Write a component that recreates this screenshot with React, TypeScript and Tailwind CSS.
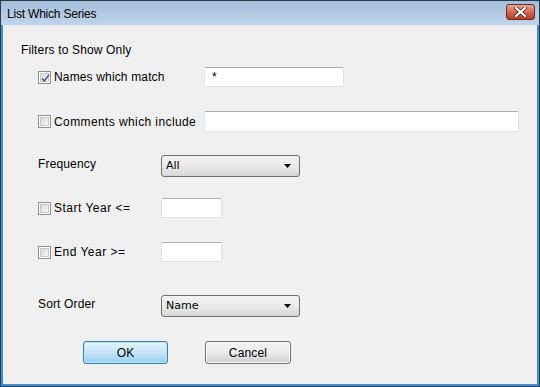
import React from "react";

const font = { fontFamily: '"Liberation Sans", Arial, sans-serif', letterSpacing: "0.15px" };

function Checkbox({ checked }: { checked?: boolean }) {
  return (
    <div className="w-[13px] h-[13px] border border-[#8e8f8f] bg-white p-[1px] shrink-0">
      <div className="w-full h-full border border-[#c6c6c6] bg-gradient-to-br from-[#d9d9d9] to-[#f7f7f7] relative">
        {checked && (
          <svg className="absolute left-[-1px] top-[-1px]" width="11" height="11" viewBox="0 0 11 11">
            <path d="M2 5.5 L4.3 8 L9 1.8" fill="none" stroke="#4a5f97" strokeWidth="1.6" />
          </svg>
        )}
      </div>
    </div>
  );
}

function TextBox({ w, value }: { w: string; value?: string }) {
  return (
    <div
      className={`${w} h-full bg-white border border-[#e2e3ea] border-t-[#abadb3] rounded-[2px] flex items-center pl-[7px] text-[12px] text-black`}
    >
      {value}
    </div>
  );
}

function Combo({ value }: { value: string }) {
  return (
    <div className="w-[139px] h-full rounded-[3px] border border-[#707070] bg-gradient-to-b from-[#f2f2f2] via-[#ebebeb] to-[#d6d6d6] flex items-center justify-between pl-[4px] pr-[8px]">
      <span className="text-[12px] text-black" style={{ fontFamily: 'Tahoma, "DejaVu Sans", "Liberation Sans", sans-serif', fontSize: "11px", letterSpacing: "0" }}>
        {value}
      </span>
      <svg width="7" height="4" viewBox="0 0 7 4">
        <path d="M0 0 H7 L3.5 4 Z" fill="#000" />
      </svg>
    </div>
  );
}

export default function App() {
  return (
    <div className="w-[540px] h-[387px] bg-[#2a3b4d] p-[1px]" style={font}>
      <div className="w-full h-full flex flex-col bg-[#3d8fd0]">
        {/* Title bar */}
        <div className="h-[24px] shrink-0 bg-gradient-to-b from-[#a3bdd9] to-[#c0d5ec] flex items-center justify-between pl-[6px] pr-[4px]">
          <span className="text-[12px] text-black mt-[1px]" style={{ fontFamily: '"Liberation Sans", Arial, sans-serif', letterSpacing: "-0.2px" }}>
            List Which Series
          </span>
          <div className="w-[29px] h-[16px] rounded-[3px] border border-[#6b2a22] bg-gradient-to-b from-[#e3a696] via-[#cf6b56] to-[#b83a24] flex items-center justify-center mt-[-3px]">
            <svg width="13" height="10" viewBox="0 0 13 10">
              <path d="M2 1 L11 9 M11 1 L2 9" stroke="#4a1f18" strokeWidth="3.6" strokeLinecap="square" />
              <path d="M2 1 L11 9 M11 1 L2 9" stroke="#ffffff" strokeWidth="2.2" strokeLinecap="square" />
            </svg>
          </div>
        </div>
        {/* Client */}
        <div className="flex-1 ml-[2px] mr-[2px] mb-[2px] bg-[#f0f0f0] flex flex-col text-[12px] text-black">
          <div className="h-[14px] mt-[18px] pl-[18px] flex items-center">Filters to Show Only</div>

          <div className="h-[20px] mt-[10px] pl-[35px] flex items-center">
            <div className="w-[166px] flex items-center gap-[3px]">
              <Checkbox checked />
              <span>Names which match</span>
            </div>
            <TextBox w="w-[140px]" value="*" />
          </div>

          <div className="h-[21px] mt-[24px] pl-[35px] flex items-center">
            <div className="w-[166px] flex items-center gap-[3px]">
              <Checkbox />
              <span style={{ letterSpacing: "0.4px" }}>Comments which include</span>
            </div>
            <TextBox w="w-[315px]" />
          </div>

          <div className="h-[22px] mt-[23px] pl-[35px] flex items-center">
            <div className="w-[123px] mt-[-4px]">Frequency</div>
            <Combo value="All" />
          </div>

          <div className="h-[20px] mt-[21px] pl-[35px] flex items-center">
            <div className="w-[123px] flex items-center gap-[3px]">
              <Checkbox />
              <span style={{ letterSpacing: "0.5px" }}>Start Year &lt;=</span>
            </div>
            <TextBox w="w-[61px]" />
          </div>

          <div className="h-[20px] mt-[24px] pl-[35px] flex items-center">
            <div className="w-[123px] flex items-center gap-[3px]">
              <Checkbox />
              <span style={{ letterSpacing: "0.5px" }}>End Year &gt;=</span>
            </div>
            <TextBox w="w-[61px]" />
          </div>

          <div className="h-[22px] mt-[33px] pl-[35px] flex items-center">
            <div className="w-[123px] mt-[-4px]">Sort Order</div>
            <Combo value="Name" />
          </div>

          <div className="h-[23px] mt-[24px] pl-[80px] flex items-center gap-[37px]">
            <div className="w-[85px] h-full rounded-[3px] border border-[#3c7fb1] bg-gradient-to-b from-[#e5f4fc] via-[#c4e5f6] to-[#98d1ef] flex items-center justify-center shadow-[inset_0_0_0_1px_#b6e3fa]">
              OK
            </div>
            <div className="w-[86px] h-full rounded-[3px] border border-[#707070] bg-gradient-to-b from-[#f2f2f2] via-[#ebebeb] to-[#cfcfcf] flex items-center justify-center shadow-[inset_0_0_0_1px_#fcfcfc]">
              Cancel
            </div>
          </div>
        </div>
      </div>
    </div>
  );
}
